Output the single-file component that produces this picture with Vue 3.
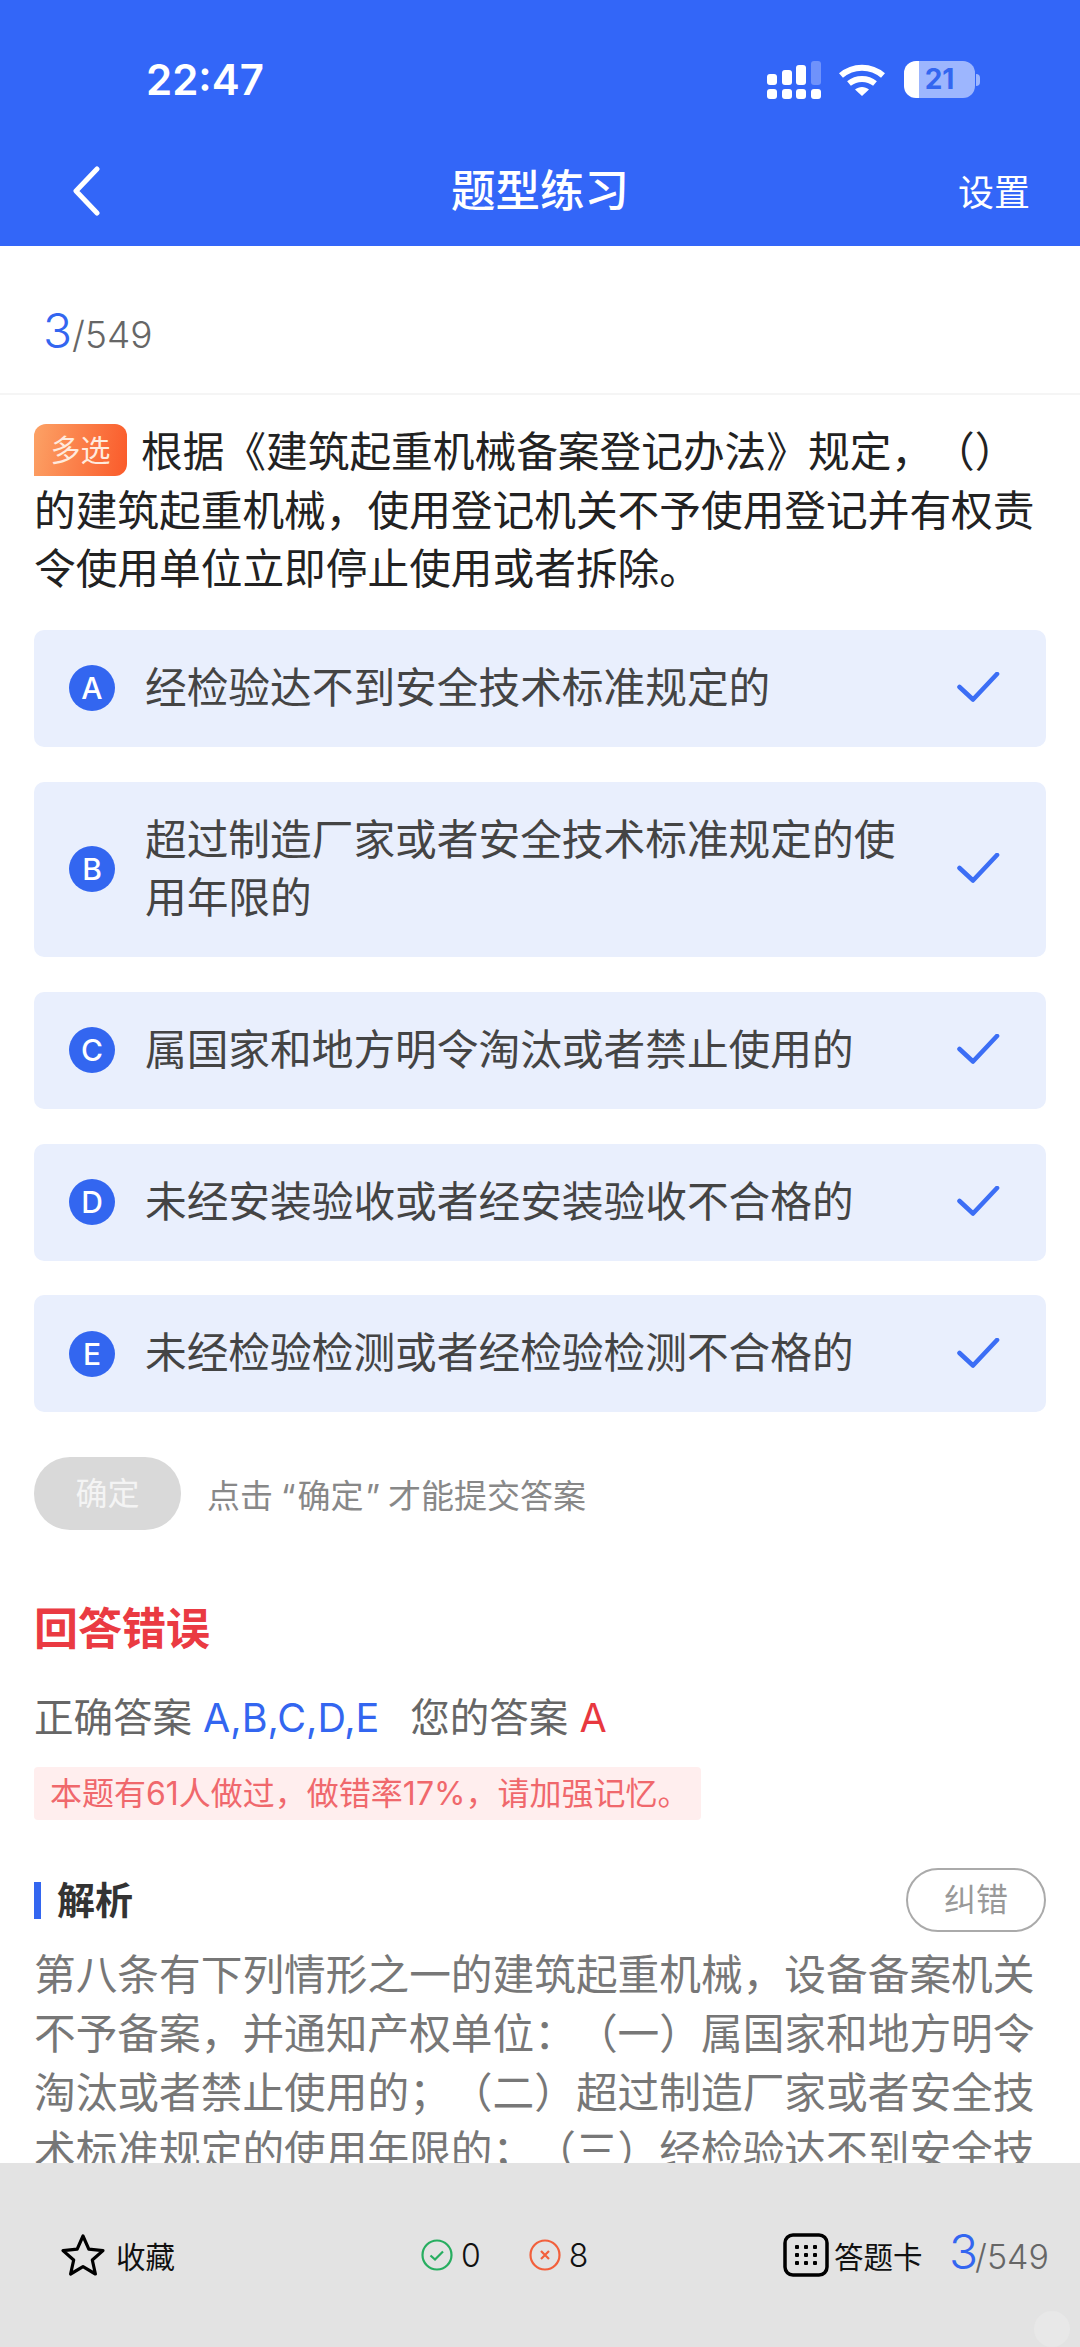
<script setup>
const options = [
  { key: 'A', text: '经检验达不到安全技术标准规定的' },
  { key: 'B', text: '超过制造厂家或者安全技术标准规定的使用年限的' },
  { key: 'C', text: '属国家和地方明令淘汰或者禁止使用的' },
  { key: 'D', text: '未经安装验收或者经安装验收不合格的' },
  { key: 'E', text: '未经检验检测或者经检验检测不合格的' }
]
</script>

<template>
  <div class="page">
    <header class="header">
      <div class="status">
        <span class="time">22:47</span>
        <div class="status-icons">
          <svg class="signal" width="54" height="38" viewBox="0 0 54 38">
            <rect x="0" y="13" width="10" height="11" rx="3" fill="#fff"/>
            <rect x="15" y="9" width="10" height="15" rx="3" fill="#fff"/>
            <rect x="29" y="4" width="10" height="20" rx="3" fill="#fff"/>
            <rect x="44" y="0" width="10" height="24" rx="3" fill="#6f92fb"/>
            <rect x="0" y="28" width="10" height="10" rx="3" fill="#fff"/>
            <rect x="15" y="28" width="10" height="10" rx="3" fill="#fff"/>
            <rect x="29" y="28" width="10" height="10" rx="3" fill="#fff"/>
            <rect x="44" y="28" width="10" height="10" rx="3" fill="#fff"/>
          </svg>
          <svg class="wifi" width="48" height="32" viewBox="0 0 48 32">
            <path d="M3 11.5C15 1 33 1 45 11.5" fill="none" stroke="#fff" stroke-width="6"/>
            <path d="M11 19.5C18.500 13.500 29.500 13.500 37 19.500" fill="none" stroke="#fff" stroke-width="6"/>
            <path d="M17 25.500C21 22 27 22 31 25.500L24 32Z" fill="#fff"/>
          </svg>
          <div class="battery-wrap">
            <div class="battery">21</div>
            <span class="battery-tip"></span>
          </div>
        </div>
      </div>
      <div class="nav">
        <svg class="back" width="32" height="50" viewBox="0 0 32 50">
          <path d="M27 3L6 25L27 47" fill="none" stroke="#fff" stroke-width="5" stroke-linecap="round" stroke-linejoin="round"/>
        </svg>
        <h1 class="title">题型练习</h1>
        <span class="settings">设置</span>
      </div>
    </header>

    <main class="main">
      <div class="counter"><span class="cur">3</span><span class="total">/549</span></div>

      <section class="content">
        <p class="question"><span class="tag">多选</span>根据《建筑起重机械备案登记办法》规定，（）的建筑起重机械，使用登记机关不予使用登记并有权责令使用单位立即停止使用或者拆除。</p>

        <div class="options">
          <div v-for="o in options" :key="o.key" class="option">
            <span class="letter">{{ o.key }}</span>
            <span class="opt-text">{{ o.text }}</span>
            <svg class="check" width="46" height="32" viewBox="0 0 46 32">
              <path d="M5.500 15L19 27.500L43 2" fill="none" stroke="#3c6ef5" stroke-width="4.600" stroke-linecap="round" stroke-linejoin="round"/>
            </svg>
          </div>
        </div>

        <div class="submit-row">
          <span class="submit">确定</span>
          <span class="hint">点击<span class="q-open">“</span>确定<span class="q-close">”</span>才能提交答案</span>
        </div>

        <div class="result">回答错误</div>
        <div class="answers">
          <span>正确答案</span> <span class="right">A,B,C,D,E</span>
          <span class="second">您的答案</span> <span class="wrong">A</span>
        </div>
        <div class="stat">本题有61人做过，做错率17%，请加强记忆。</div>

        <div class="analysis-head">
          <span class="analysis-title">解析</span>
          <span class="report">纠错</span>
        </div>
        <p class="analysis">第八条有下列情形之一的建筑起重机械，设备备案机关不予备案，并通知产权单位：（一）属国家和地方明令淘汰或者禁止使用的；（二）超过制造厂家或者安全技术标准规定的使用年限的；（三）经检验达不到安全技术标准规定的；</p>
      </section>
    </main>

    <footer class="footer">
      <div class="fav">
        <svg width="46" height="44" viewBox="0 0 46 44">
          <path d="M23 3L28.800 16.200L43 17.600L32.300 27L35.400 41L23 33.700L10.600 41L13.700 27L3 17.600L17.200 16.200Z" fill="none" stroke="#000" stroke-width="3.200" stroke-linejoin="round"/>
        </svg>
        <span>收藏</span>
      </div>
      <div class="scores">
        <span class="score">
          <svg width="32" height="32" viewBox="0 0 32 32">
            <circle cx="16" cy="16" r="14.500" fill="none" stroke="#27ae60" stroke-width="2.200"/>
            <path d="M9.500 16.500L14 20.500L22 12.500" fill="none" stroke="#27ae60" stroke-width="2.200"/>
          </svg>
          <span>0</span>
        </span>
        <span class="score">
          <svg width="32" height="32" viewBox="0 0 32 32">
            <circle cx="16" cy="16" r="14.500" fill="none" stroke="#f2603c" stroke-width="2.200"/>
            <path d="M12 12L20 20M20 12L12 20" fill="none" stroke="#f2603c" stroke-width="2.200"/>
          </svg>
          <span>8</span>
        </span>
      </div>
      <div class="card-group">
        <svg width="46" height="44" viewBox="0 0 46 44">
          <rect x="2" y="2" width="42" height="40" rx="8" fill="none" stroke="#000" stroke-width="3.500"/>
          <g fill="#000">
            <rect x="12" y="12" width="4" height="4" rx="1"/><rect x="21" y="12" width="4" height="4" rx="1"/><rect x="30" y="12" width="4" height="4" rx="1"/>
            <rect x="12" y="20" width="4" height="4" rx="1"/><rect x="21" y="20" width="4" height="4" rx="1"/><rect x="30" y="20" width="4" height="4" rx="1"/>
            <rect x="12" y="28" width="4" height="4" rx="1"/><rect x="21" y="28" width="4" height="4" rx="1"/><rect x="30" y="28" width="4" height="4" rx="1"/>
          </g>
        </svg>
        <span class="card-label">答题卡</span>
        <span class="foot-counter"><span class="cur">3</span><span class="total">/549</span></span>
      </div>
      <span class="float-dot"></span>
    </footer>
  </div>
</template>

<style scoped>
.page {
  width: 1080px;
  height: 2347px;
  display: flex;
  flex-direction: column;
  overflow: hidden;
  background: #fff;
  font-family: "Inter", "Noto Sans CJK SC", sans-serif;
  font-weight: 400;
  text-spacing-trim: space-all;
}
.header {
  height: 246px;
  flex: none;
  background: #3366f8;
  color: #fff;
  display: flex;
  flex-direction: column;
}
.status {
  display: flex;
  justify-content: space-between;
  align-items: center;
  box-sizing: border-box;
  height: 100px;
  padding: 59px 100px 0 146px;
}
.time {
  font-size: 42px;
  font-weight: 600;
  line-height: 42px;
}
.status-icons {
  display: flex;
  align-items: center;
  gap: 17px;
}
.wifi { margin-right: 1px; }
.battery-wrap {
  display: flex;
  align-items: center;
  gap: 1px;
}
.battery {
  width: 71px;
  height: 37px;
  border-radius: 12px;
  background: linear-gradient(90deg, #fff 0 15px, #9db6fe 15px);
  color: #3366f0;
  font-size: 28px;
  font-weight: 700;
  line-height: 37px;
  text-align: center;
}
.battery-tip {
  width: 4px;
  height: 12px;
  background: #9db6fe;
  border-radius: 0 4px 4px 0;
}
.nav {
  flex: 1;
  display: grid;
  grid-template-columns: 1fr auto 1fr;
  align-items: center;
  padding: 36px 50px 0;
}
.back { margin-left: 20px; }
.title {
  margin: 0;
  font-size: 44.500px;
  font-weight: 500;
  line-height: 60px;
}
.settings {
  justify-self: end;
  font-size: 36px;
  line-height: 50px;
  margin-top: 4px;
}
.main {
  flex: 1;
  min-height: 0;
  overflow: hidden;
}
.counter {
  height: 149px;
  box-sizing: border-box;
  padding: 55px 43px 0;
  border-bottom: 2px solid #f5f5f5;
  line-height: 60px;
}
.cur {
  color: #3366f0;
  font-size: 48px;
  font-weight: 300;
}
.total {
  color: #666;
  font-size: 37px;
  font-weight: 300;
}
.content {
  padding: 28px 34px 0;
}
.question {
  margin: 0;
  font-size: 41.700px;
  line-height: 58.500px;
  color: #222;
}
.tag {
  display: inline-block;
  width: 93px;
  height: 52px;
  line-height: 52px;
  text-align: center;
  font-size: 30px;
  color: #ffeadd;
  margin-right: 14px;
  vertical-align: top;
  margin-top: 1px;
  border-radius: 12px 12px 12px 0;
  background: linear-gradient(100deg, #fca266, #fa5a2a);
}
.options {
  display: flex;
  flex-direction: column;
  gap: 34.700px;
  margin-top: 31.500px;
}
.option {
  display: flex;
  align-items: center;
  background: #e9effd;
  border-radius: 10px;
  padding: 29px 46px 29.500px 35px;
}
.letter {
  width: 46px;
  height: 46px;
  flex: none;
  border-radius: 50%;
  background: #3366f0;
  color: #fff;
  font-size: 30px;
  font-weight: 500;
  line-height: 46px;
  text-align: center;
}
.opt-text {
  margin-left: 30px;
  width: 770px;
  flex: none;
  font-size: 41.700px;
  line-height: 58.500px;
  color: #444;
}
.check {
  margin-left: auto;
  flex: none;
}
.submit-row {
  display: flex;
  align-items: center;
  margin-top: 45px;
}
.submit {
  width: 147px;
  height: 73px;
  border-radius: 36px;
  background: #d9d9d9;
  color: #f4f4f4;
  font-size: 32px;
  line-height: 73px;
  text-align: center;
}
.hint {
  margin-left: 26px;
  font-size: 33px;
  color: #888;
}
.q-open { margin-left: 8px; margin-right: 2px; }
.q-close { margin-left: 2px; margin-right: 8px; }
.result {
  margin-top: 70px;
  font-size: 44px;
  line-height: 58px;
  font-weight: 700;
  color: #ea3a42;
}
.answers {
  margin-top: 31px;
  font-size: 39.500px;
  line-height: 58px;
  color: #666;
}
.right { color: #3366f0; }
.second { margin-left: 31px; }
.wrong { color: #e8383f; }
.stat {
  display: block;
  margin-top: 20px;
  width: 667px;
  height: 53px;
  box-sizing: border-box;
  padding-left: 16px;
  border-radius: 4px;
  background: #ffeeee;
  color: #f0686c;
  font-size: 32px;
  line-height: 53px;
  white-space: nowrap;
}
.analysis-head {
  display: flex;
  align-items: center;
  justify-content: space-between;
  margin-top: 48px;
}
.analysis-title {
  border-left: 7px solid #3366f0;
  padding-left: 16px;
  font-size: 38px;
  font-weight: 700;
  line-height: 37px;
  color: #333;
}
.report {
  width: 140px;
  height: 64px;
  box-sizing: border-box;
  border: 2px solid #aaa;
  border-radius: 32px;
  color: #999;
  font-size: 32px;
  line-height: 60px;
  text-align: center;
}
.analysis {
  margin: 14px 0 0;
  font-size: 41.700px;
  line-height: 58.700px;
  color: #777;
}
.footer {
  height: 184px;
  flex: none;
  box-sizing: border-box;
  background: #e3e3e3;
  display: flex;
  align-items: center;
  padding: 0 34px 0 60px;
  position: relative;
  font-size: 29.500px;
  color: #111;
}
.fav {
  width: 361px;
  flex: none;
  display: flex;
  align-items: center;
  gap: 10px;
}
.scores {
  width: 362px;
  flex: none;
  display: flex;
  align-items: center;
  gap: 48px;
}
.score {
  display: flex;
  align-items: center;
  gap: 8px;
  font-size: 32px;
  font-weight: 300;
}
.card-group {
  display: flex;
  align-items: center;
  gap: 5px;
}
.card-label { width: 110px; }
.foot-counter { line-height: 50px; white-space: nowrap; }
.foot-counter .total { font-size: 34px; margin-left: -3px; }
.float-dot {
  position: absolute;
  right: 10px;
  bottom: 0;
  width: 36px;
  height: 36px;
  border-radius: 50%;
  background: #e8e8e8;
}
</style>
